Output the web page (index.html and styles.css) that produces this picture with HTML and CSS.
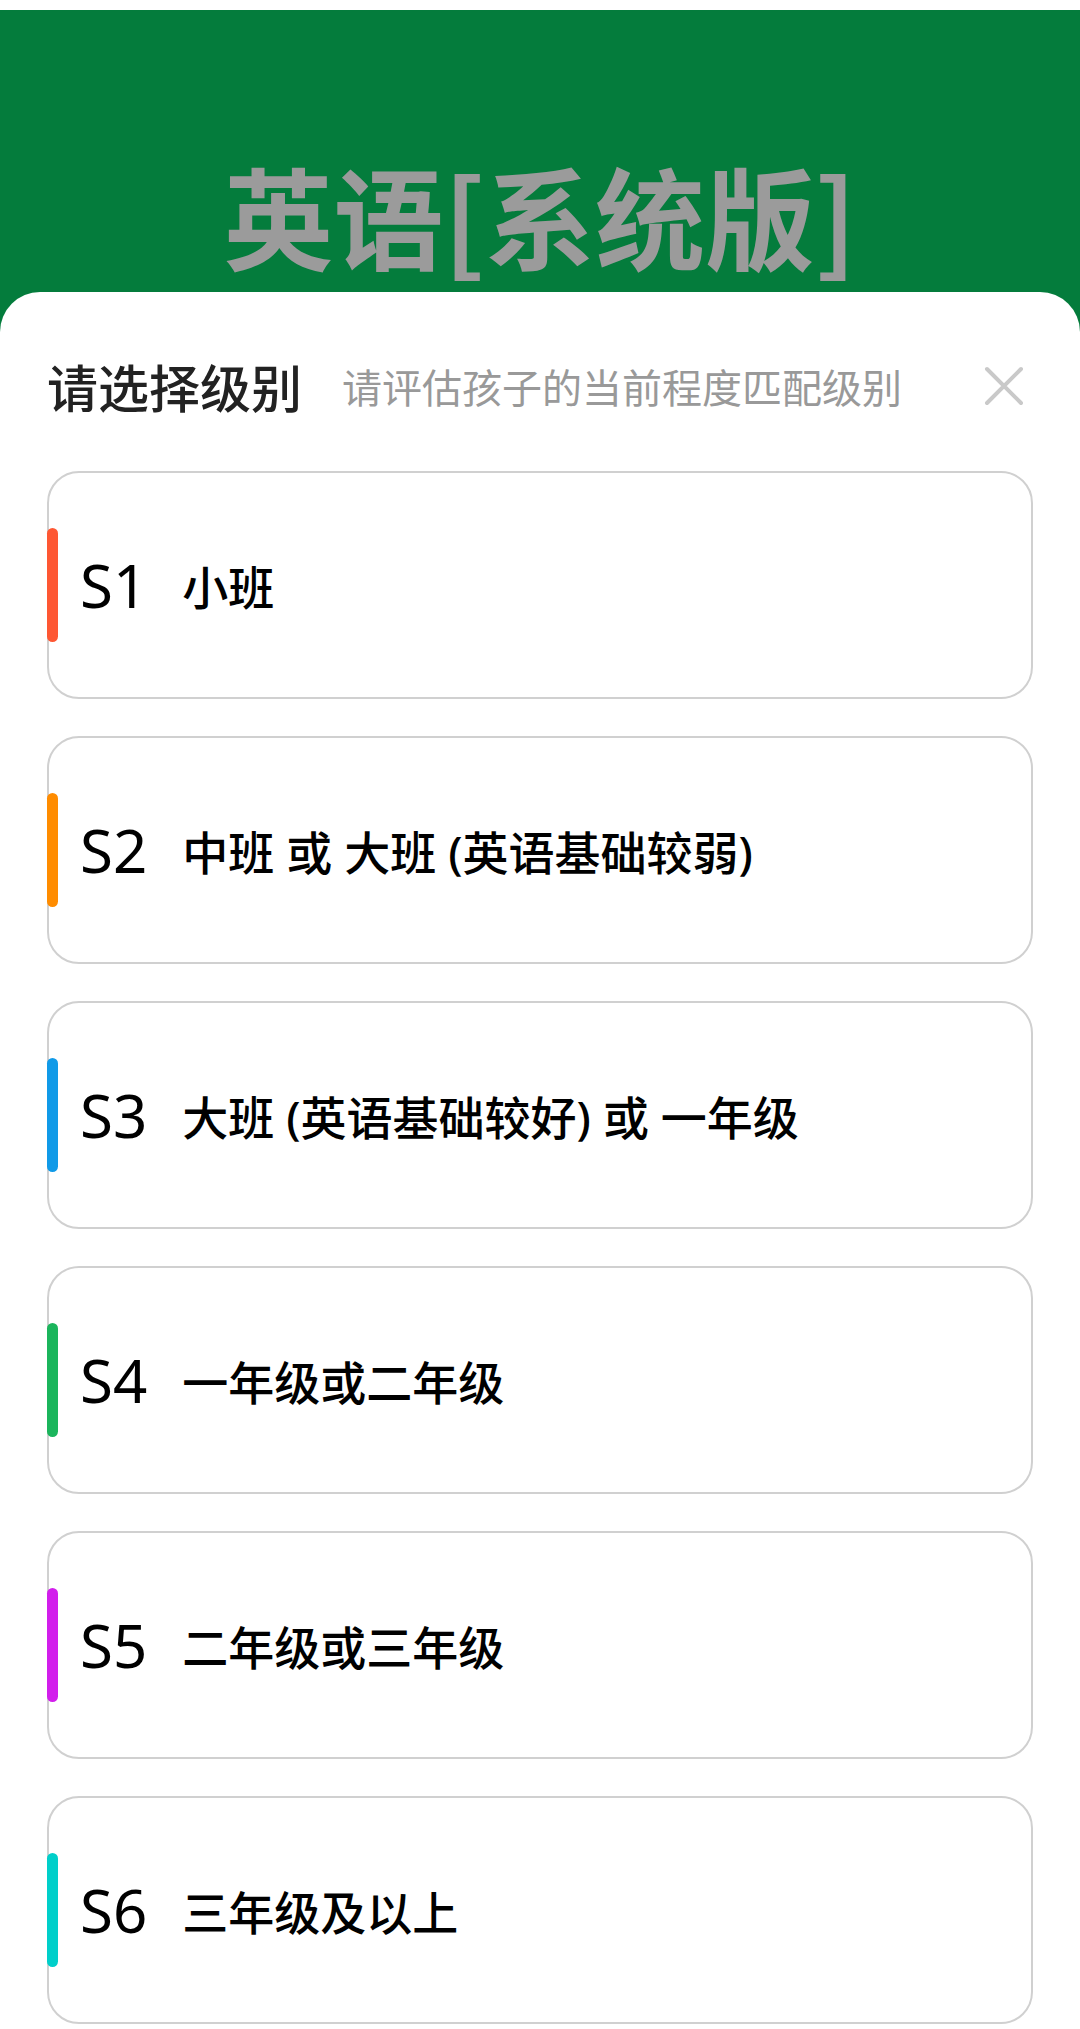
FILE: index.html
```html
<!DOCTYPE html>
<html lang="zh-CN">
<head>
	<meta charset="utf-8">
	<title>英语[系统版]</title>
	<link rel="stylesheet" href="styles.css">
</head>
<body>

	<div class="statusbar"></div>

	<div class="page">
		<div class="banner">
			<h1>英语[系统版]</h1>
		</div>

		<div class="sheet">
			<div class="sheet-head">
				<span class="sheet-title">请选择级别</span>
				<span class="sheet-tip">请评估孩子的当前程度匹配级别</span>
				<svg class="close" width="40" height="40" viewBox="0 0 40 40">
					<path d="M3 3 L37 37 M37 3 L3 37" stroke="#c9c9c9" stroke-width="4" stroke-linecap="round" fill="none"/>
				</svg>
			</div>

			<ul class="levels">
				<li class="level">
					<span class="bar s1"></span>
					<span class="code">S1</span>
					<span class="desc">小班</span>
				</li>
				<li class="level">
					<span class="bar s2"></span>
					<span class="code">S2</span>
					<span class="desc">中班 或 大班 (英语基础较弱)</span>
				</li>
				<li class="level">
					<span class="bar s3"></span>
					<span class="code">S3</span>
					<span class="desc">大班 (英语基础较好) 或 一年级</span>
				</li>
				<li class="level">
					<span class="bar s4"></span>
					<span class="code">S4</span>
					<span class="desc">一年级或二年级</span>
				</li>
				<li class="level">
					<span class="bar s5"></span>
					<span class="code">S5</span>
					<span class="desc">二年级或三年级</span>
				</li>
				<li class="level">
					<span class="bar s6"></span>
					<span class="code">S6</span>
					<span class="desc">三年级及以上</span>
				</li>
			</ul>
		</div>
	</div>

</body>
</html>
```
FILE: styles.css
```css
body {
	margin: 0;
	background: #fff;
	font-family: "Noto Sans", "Noto Sans CJK SC", sans-serif;
	color: #111;
}

.statusbar {
	height: 10px;
	background: #fff;
}

.page {
	background: #047c3c;
}

.banner {
	height: 282px;
	box-sizing: border-box;
	padding-top: 148px;
}

.banner h1 {
	margin: 0;
	text-align: center;
	font-family: "Noto Sans CJK SC", sans-serif;
	font-weight: 700;
	font-size: 110px;
	line-height: 112px;
	color: #9b9b9b;
}

.sheet {
	background: #fff;
	border-radius: 40px 40px 0 0;
	padding: 64px 47px 6px;
}

.sheet-head {
	display: flex;
	align-items: center;
	height: 60px;
	font-family: "Noto Sans CJK SC", sans-serif;
}

.sheet-title {
	font-size: 51px;
	font-weight: 500;
	color: #222;
}

.sheet-tip {
	margin-left: 40px;
	font-size: 40px;
	color: #999;
}

.close {
	margin-left: auto;
	margin-right: 9px;
}

.levels {
	list-style: none;
	margin: 55px 0 0;
	padding: 0;
	display: flex;
	flex-direction: column;
	gap: 37px;
}

.level {
	position: relative;
	display: flex;
	align-items: center;
	height: 228px;
	box-sizing: border-box;
	border: 2px solid #d0d0d0;
	border-radius: 32px;
	padding-left: 31px;
}

.bar {
	position: absolute;
	left: -2px;
	top: 55px;
	bottom: 55px;
	width: 11px;
	border-radius: 6px;
}

.s1 { background: #fe5733; }
.s2 { background: #ff8c00; }
.s3 { background: #109ae8; }
.s4 { background: #1bb55c; }
.s5 { background: #d21eec; }
.s6 { background: #00cfca; }

.code {
	font-family: "Noto Sans", sans-serif;
	font-size: 60px;
	color: #000;
}

.desc {
	margin-left: 35px;
	font-family: "Noto Sans", "Noto Sans CJK SC", sans-serif;
	font-size: 46px;
	font-weight: 500;
	color: #000;
}
```
